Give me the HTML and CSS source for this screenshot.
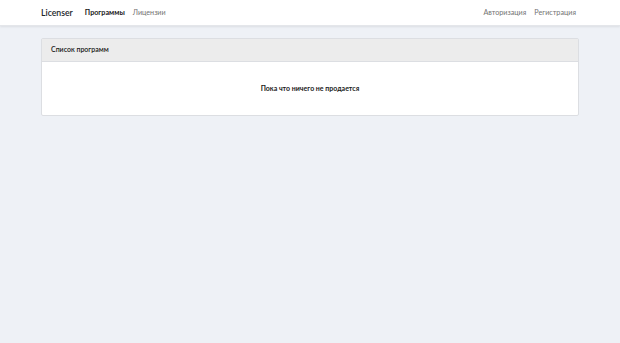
FILE: index.html
```html
<!DOCTYPE html>
<html lang="ru">
<head>
<meta charset="utf-8">
<title>Licenser</title>
<link rel="stylesheet" href="styles.css">
</head>
<body>
<nav class="navbar">
  <div class="container nav-inner">
    <div class="nav-left">
      <a class="brand" href="#">Licenser</a>
      <a class="nav-link active" href="#">Программы</a>
      <a class="nav-link" href="#">Лицензии</a>
    </div>
    <div class="nav-right">
      <a class="nav-link" href="#">Авторизация</a>
      <a class="nav-link" href="#">Регистрация</a>
    </div>
  </div>
</nav>
<main class="main">
  <div class="container">
    <div class="card">
      <div class="card-header">Список программ</div>
      <div class="card-body">
        <p class="empty">Пока что ничего не продается</p>
      </div>
    </div>
  </div>
</main>
</body>
</html>
```

FILE: styles.css
```css
* { box-sizing: border-box; }
html, body { margin: 0; padding: 0; }
body {
  background: #eef1f6;
  font-family: "Lato", "Open Sans", sans-serif;
  font-size: 7px;
  line-height: 1.6;
  color: #212529;
}
a { text-decoration: none; }
.container {
  width: 538px;
  margin: 0 auto;
}
.navbar {
  background: #fff;
  height: 26px;
  box-shadow: 0 1px 2px rgba(0,0,0,0.08);
  border-bottom: 1px solid #e4e6ea;
}
.nav-inner {
  height: 100%;
  display: flex;
  align-items: center;
  justify-content: space-between;
}
.nav-left, .nav-right {
  display: flex;
  align-items: center;
}
.brand {
  font-size: 8.7px;
  color: #212529;
  font-weight: 600;
  margin-right: 12px;
}
.nav-link {
  color: #737373;
  font-size: 7.2px;
  padding: 0 4px;
}
.nav-left .nav-link.active { color: #1a1a1a; font-weight: 700; padding-left: 0; }
.nav-right .nav-link:last-child { padding-right: 3px; }
.main { padding-top: 12px; }
.card {
  background: #fff;
  border: 1px solid #dcdee2;
  border-radius: 2px;
}
.card-header {
  background: #ececec;
  border-bottom: 1px solid #dcdee2;
  height: 23px;
  padding: 0 9px;
  display: flex;
  align-items: center;
  font-size: 7px;
  color: #1a1a1a;
  font-weight: 600;
}
.card-body {
  height: 53px;
  display: flex;
  align-items: center;
  justify-content: center;
}
.empty {
  margin: 0;
  font-weight: 700;
  font-size: 7px;
  color: #1a1a1a;
}
```
